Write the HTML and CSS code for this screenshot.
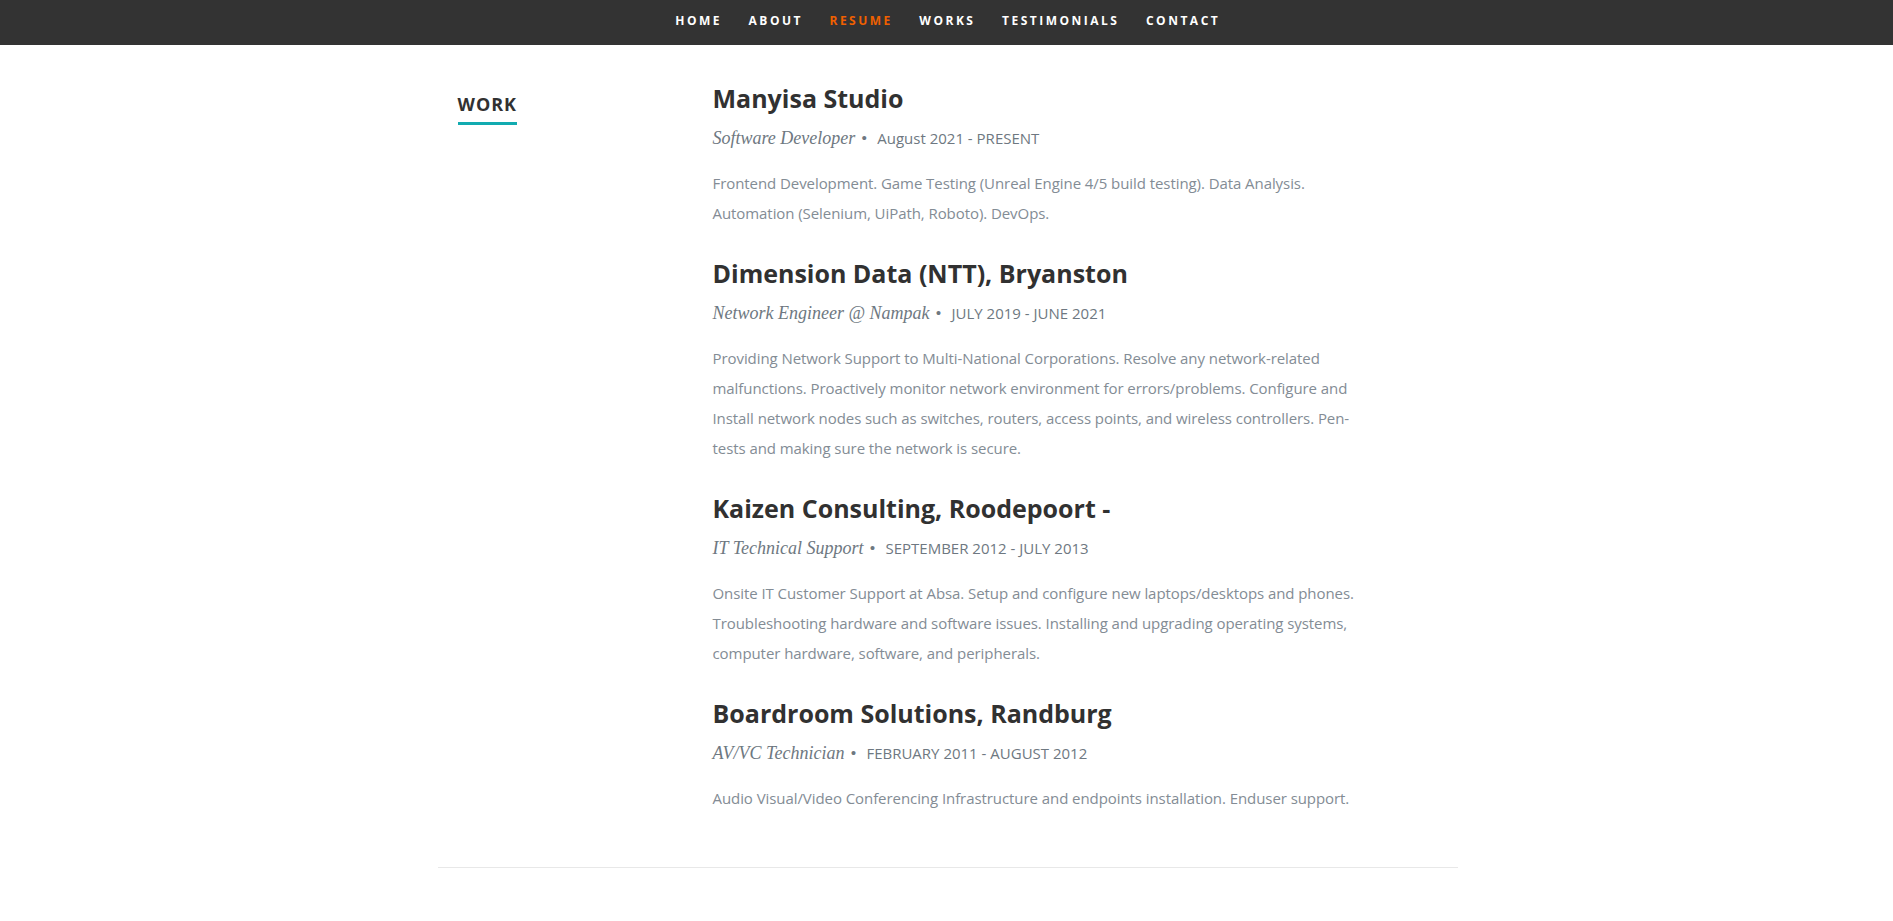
FILE: index.html
```html
<!DOCTYPE html>
<html lang="en">
<head>
<meta charset="utf-8">
<title>Resume</title>
<link rel="stylesheet" href="styles.css">
</head>
<body>
<nav class="nav">
  <ul class="nav-list">
    <li><a class="nav-link" href="#home">Home</a></li>
    <li><a class="nav-link" href="#about">About</a></li>
    <li><a class="nav-link current" href="#resume">Resume</a></li>
    <li><a class="nav-link" href="#works">Works</a></li>
    <li><a class="nav-link" href="#testimonials">Testimonials</a></li>
    <li><a class="nav-link" href="#contact">Contact</a></li>
  </ul>
</nav>
<section class="resume">
  <div class="row work">
    <div class="header-col">
      <h1 class="section-title"><span>Work</span></h1>
    </div>
    <div class="main-col">
      <div class="item">
        <h3 class="company">Manyisa Studio</h3>
        <p class="info">Software Developer<span class="bullet">&bull;</span><em class="date">August 2021 - PRESENT</em></p>
        <p class="desc">Frontend Development. Game Testing (Unreal Engine 4/5 build testing). Data Analysis. Automation (Selenium, UiPath, Roboto). DevOps.</p>
      </div>
      <div class="item">
        <h3 class="company">Dimension Data (NTT), Bryanston</h3>
        <p class="info">Network Engineer @ Nampak<span class="bullet">&bull;</span><em class="date">JULY 2019 - JUNE 2021</em></p>
        <p class="desc">Providing Network Support to Multi-National Corporations. Resolve any network-related malfunctions. Proactively monitor network environment for errors/problems. Configure and Install network nodes such as switches, routers, access points, and wireless controllers. Pen-tests and making sure the network is secure.</p>
      </div>
      <div class="item">
        <h3 class="company">Kaizen Consulting, Roodepoort -</h3>
        <p class="info">IT Technical Support<span class="bullet">&bull;</span><em class="date">SEPTEMBER 2012 - JULY 2013</em></p>
        <p class="desc">Onsite IT Customer Support at Absa. Setup and configure new laptops/desktops and phones. Troubleshooting hardware and software issues. Installing and upgrading operating systems, computer hardware, software, and peripherals.</p>
      </div>
      <div class="item">
        <h3 class="company">Boardroom Solutions, Randburg</h3>
        <p class="info">AV/VC Technician<span class="bullet">&bull;</span><em class="date">FEBRUARY 2011 - AUGUST 2012</em></p>
        <p class="desc">Audio Visual/Video Conferencing Infrastructure and endpoints installation. Enduser support.</p>
      </div>
    </div>
  </div>
</section>
</body>
</html>
```
FILE: styles.css
```css
* { box-sizing: border-box; }
html, body { margin: 0; padding: 0; }
body {
  background: #fff;
  font-family: "Open Sans", "Liberation Sans", sans-serif;
  color: #838C95;
}

.nav {
  background: #333333;
  height: 45px;
}
.nav-list {
  list-style: none;
  margin: 0;
  padding: 0;
  display: flex;
  justify-content: center;
}
.nav-link {
  display: block;
  padding: 0 12px 0 14.5px;
  line-height: 41px;
  font-size: 12px;
  font-weight: 700;
  letter-spacing: 2.5px;
  text-transform: uppercase;
  color: #fff;
  text-decoration: none;
}
.nav-link.current { color: #F06000; }

.resume { padding: 38px 0 0 2px; }
.row {
  width: 1020px;
  margin: 0 auto;
  display: flex;
}
.work {
  padding-bottom: 24px;
  border-bottom: 1px solid #E8E8E8;
}
.header-col {
  width: 25%;
  padding: 9px 20px 0;
}
.section-title {
  margin: 0;
  font-size: 18px;
  line-height: 24px;
  font-weight: 700;
  letter-spacing: 1px;
  text-transform: uppercase;
  color: #313131;
}
.section-title span {
  display: inline-block;
  padding-bottom: 6px;
  border-bottom: 3px solid #11ABB0;
}
.main-col {
  width: 75%;
  padding: 0 102px 0 20px;
}
.company {
  margin: 0;
  font-size: 25px;
  line-height: 30px;
  font-weight: 700;
  color: #313131;
}
.info {
  height: 24px;
  margin: 13px 0 18px;
  font-family: "Liberation Serif", "DejaVu Serif", serif;
  font-style: italic;
  font-size: 18px;
  line-height: 24px;
  color: #6E7881;
}
.bullet {
  font-style: normal;
  font-size: 17px;
  line-height: 1;
  margin: 0 10px 0 6px;
}
.date {
  font-family: "Open Sans", "Liberation Sans", sans-serif;
  font-style: normal;
  font-size: 15px;
  line-height: 1;
  color: #6E7881;
}
.desc {
  margin: 0 0 30px;
  font-size: 15px;
  line-height: 30px;
  letter-spacing: -0.07px;
  color: #838C95;
}
```
